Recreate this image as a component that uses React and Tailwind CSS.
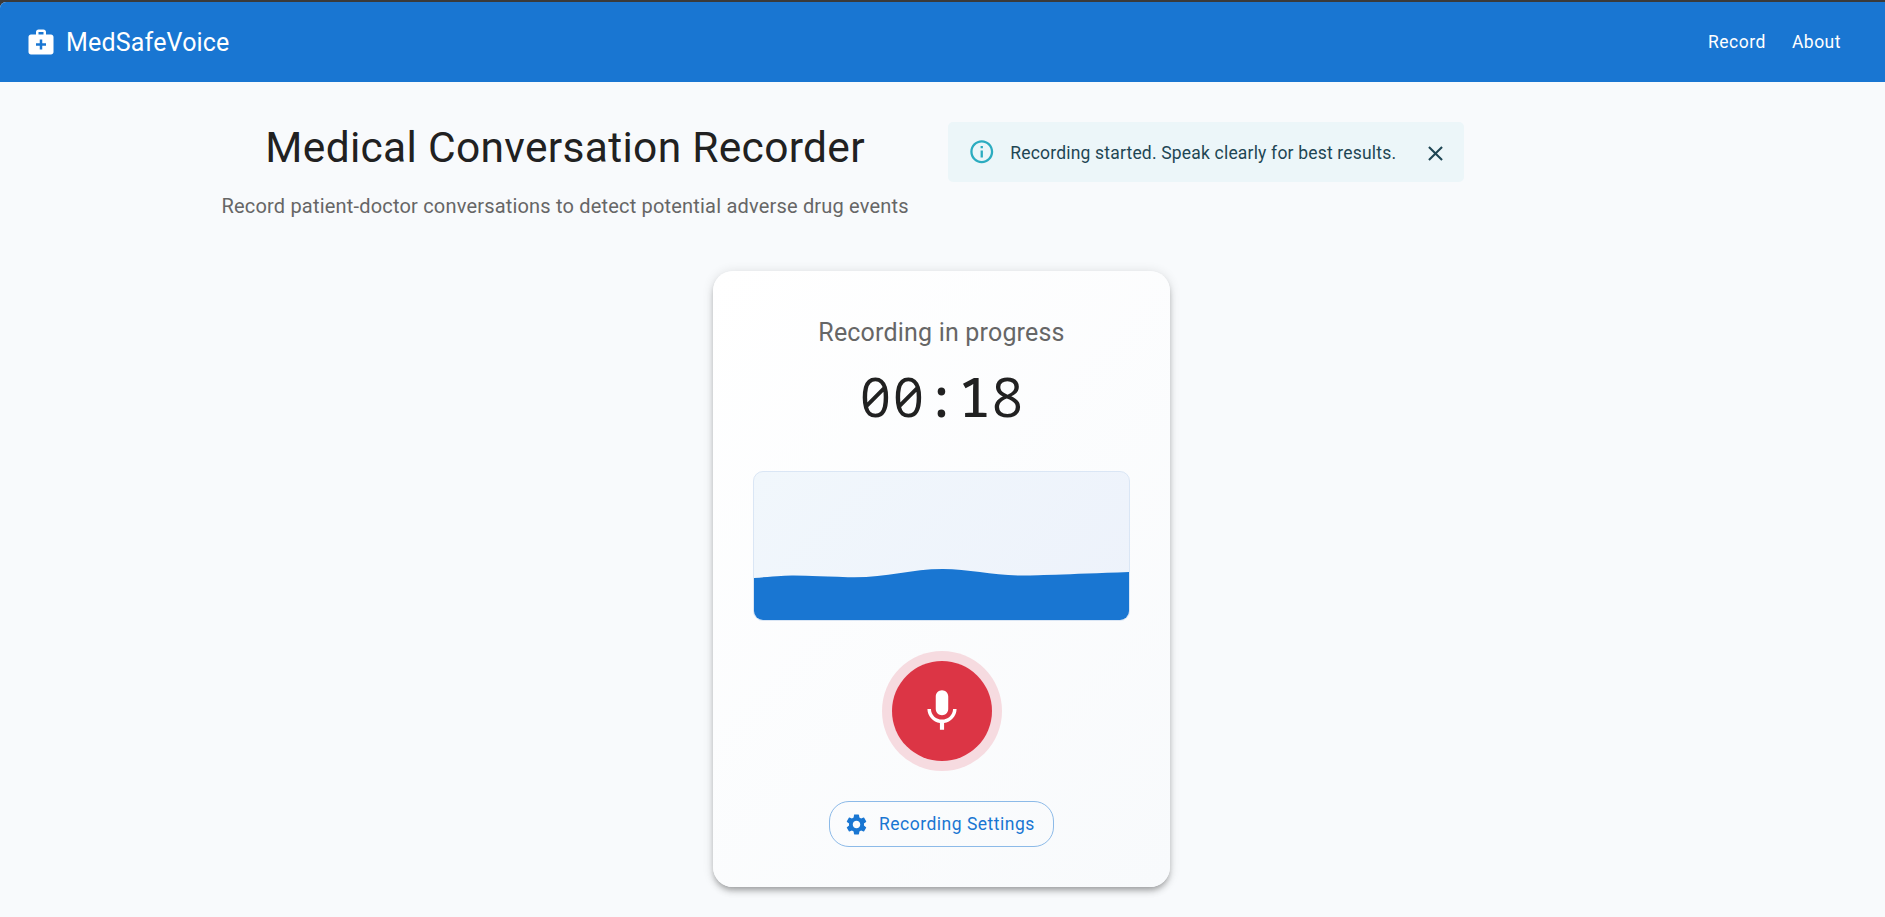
import React from "react";
import { MdMedicalServices, MdMic, MdSettings, MdClose, MdInfoOutline } from "react-icons/md";

export default function App() {
  return (
    <div className="min-h-[917px] bg-[#3a3a3a] pt-[2px] font-['Roboto',sans-serif]">
      <div className="min-h-[915px] rounded-tl-[6px] bg-[#f8fafc]">
        <header className="flex h-20 items-center rounded-tl-[6px] bg-[#1976d2] pl-[26px] pr-[44px] text-white">
          <MdMedicalServices className="size-[30px]" />
          <span className="ml-[10px] pt-[2px] text-[25px] tracking-[0.0075em]">MedSafeVoice</span>
          <nav className="ml-auto flex gap-[26px] text-[17.5px] font-[450] tracking-[0.02857em]">
            <a>Record</a>
            <a>About</a>
          </nav>
        </header>
        <div className="flex h-[189px] items-start gap-[39px] pl-[221.5px] pt-10">
          <div className="text-center">
            <h1 className="mb-[14px] text-[42.5px] leading-[52.5px] tracking-[0.00735em] text-[#212121]">Medical Conversation Recorder</h1>
            <p className="text-[20px] leading-[35px] tracking-[0.00938em] text-[#666666]">
              Record patient-doctor conversations to detect potential adverse drug events
            </p>
          </div>
          <div className="flex h-[60px] w-[516px] items-center rounded-[5px] bg-[#ecf6f9] pl-5 text-[#1e4654]">
            <MdInfoOutline className="size-[27.5px] text-[#2cacc0]" />
            <span className="ml-[15px] pt-[2px] text-[17.5px] tracking-[0.01071em]">Recording started. Speak clearly for best results.</span>
            <MdClose className="ml-auto mr-4 mt-[3px] size-[25px]" />
          </div>
        </div>
        <main className="ml-[713px] flex h-[616px] w-[457px] flex-col items-center rounded-[20px] bg-linear-135 from-white to-[#f8fafc] px-10 pt-[42px] shadow-[0_4px_5px_-2px_rgba(0,0,0,0.2),0_5px_6px_0_rgba(0,0,0,0.14),0_1px_12px_0_rgba(0,0,0,0.12)]">
          <h2 className="text-[25px] leading-10 tracking-[0.0075em] text-[#666666]">Recording in progress</h2>
          <div className="mt-[8px] flex h-[70px] items-baseline font-['Open_Sans'] text-[54px] leading-[70px] font-[500] text-[#212121] [font-feature-settings:'zero'_1]">
            <span className="flex w-[33px] justify-center">0</span>
            <span className="flex w-[33px] justify-center">0</span>
            <span className="flex w-[33px] justify-center font-['Noto_Sans_Mono','DejaVu_Sans_Mono',monospace]">:</span>
            <span className="flex w-[33px] justify-center font-['Noto_Sans_Mono','DejaVu_Sans_Mono',monospace]">1</span>
            <span className="flex w-[33px] justify-center">8</span>
          </div>
          <div className="mt-10 h-[150px] w-[377px] shrink-0 overflow-hidden rounded-[10px] border border-[#dae6f5] bg-linear-135 from-[#f1f7fc] to-[#edf2fb]">
            <svg viewBox="0 0 375 148" className="h-[148px] w-[375px]" aria-hidden="true">
              <path fill="#1976d2" d="M0 106 Q30 103.5 38 103.5 Q45 103.3 94 105.2 C130 106.4 155 97 189 97 C215 97 240 103.5 268 103.5 Q282 103.5 375 100 V148 H0Z" />
            </svg>
          </div>
          <button className="mt-10 flex size-[100px] shrink-0 items-center justify-center rounded-full bg-[#dc3545] text-white shadow-[0_0_0_10px_#f6dbe0]">
            <MdMic className="size-[50px]" />
          </button>
          <button className="mt-10 flex h-[46px] w-[225px] shrink-0 items-center rounded-[20px] border border-[#8cbae8] pl-[14px] text-[17.5px] tracking-[0.02857em] text-[#1976d2]">
            <MdSettings className="mr-[10px] size-[25px]" />
            Recording Settings
          </button>
        </main>
      </div>
    </div>
  );
}
